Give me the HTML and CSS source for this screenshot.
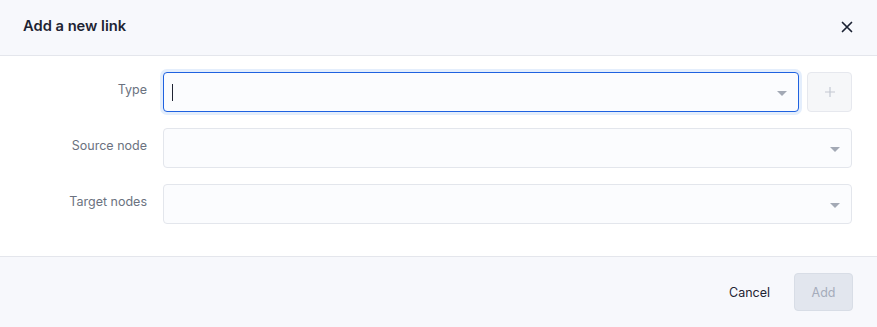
FILE: index.html
```html
<!DOCTYPE html>
<html>
<head>
<meta charset="utf-8">
<link rel="stylesheet" href="styles.css">
</head>
<body>
<div class="modal">
  <header class="head">
    <h1 class="title">Add a new link</h1>
    <button class="close" aria-label="Close">
      <svg width="12" height="12" viewBox="0 0 12 12"><path d="M1.5 1.5L10.5 10.5M10.5 1.5L1.5 10.5" stroke="#1b2233" stroke-width="1.7" stroke-linecap="round"/></svg>
    </button>
  </header>
  <div class="body">
    <label class="label">Type</label>
    <div class="typerow">
      <div class="select focus">
        <span class="cursor"></span>
        <span class="arrow"></span>
      </div>
      <button class="plus" disabled>
        <svg width="12" height="12" viewBox="0 0 12 12"><path d="M6 1V11M1 6H11" stroke="#c3c8d2" stroke-width="1.2"/></svg>
      </button>
    </div>
    <label class="label">Source node</label>
    <div class="select"><span class="arrow"></span></div>
    <label class="label">Target nodes</label>
    <div class="select"><span class="arrow"></span></div>
  </div>
  <footer class="foot">
    <button class="cancel">Cancel</button>
    <button class="add" disabled>Add</button>
  </footer>
</div>
</body>
</html>
```
FILE: styles.css
```css
* { box-sizing: border-box; }
html, body { margin: 0; padding: 0; background: #fff; }
body { font-family: Inter, "Noto Sans", sans-serif; color: #1f2433; }
.modal { width: 877px; height: 327px; display: flex; flex-direction: column; }
.head {
  height: 56px; background: #f7f8fc; border-bottom: 1px solid #e4e6ec;
  display: flex; align-items: center; justify-content: space-between;
  padding: 0 23px 4px 23px;
}
.title { margin: 0; font-size: 14.7px; font-weight: 600; color: #1e2433; letter-spacing: 0; }
.close { background: none; border: 0; padding: 0; width: 12px; height: 12px; display: flex; margin-top: 3px; margin-right: 1px; }
.body {
  display: grid; grid-template-columns: 124px 1fr; column-gap: 16px; row-gap: 16px;
  padding: 16px 25px 32px 23px; align-items: start;
}
.label { font-size: 12.5px; line-height: 16px; padding-top: 10px; color: #6b7280; text-align: right; }
.typerow { display: flex; gap: 8px; }
.select {
  flex: 1; height: 40px; border: 1px solid #e3e6ec; border-radius: 4px; background: #fbfcfe;
  position: relative; display: flex; align-items: center;
}
.select.focus { border-color: #1f62e0; box-shadow: 0 0 0 3px #e4eefc; }
.cursor { width: 1px; height: 17px; background: #1f2433; margin-left: 8px; }
.arrow {
  position: absolute; right: 11px; top: 18px; width: 0; height: 0;
  border-left: 5px solid transparent; border-right: 5px solid transparent; border-top: 5px solid #a3a9b5;
}
.plus {
  width: 45px; height: 40px; border: 1px solid #e6e8ee; border-radius: 4px; background: #f6f7f9;
  display: flex; align-items: center; justify-content: center; padding: 0;
}
.foot {
  flex: 1; background: #f7f8fc; border-top: 1px solid #e4e6ec;
  display: flex; justify-content: flex-end; align-items: flex-start; gap: 24px;
  padding: 16px 24px 0 0;
}
.cancel { background: none; border: 0; padding: 0; height: 38px; font: 12.5px Inter, sans-serif; color: #1f2433; }
.add {
  width: 59px; height: 38px; border: 1px solid #d8dde6; border-radius: 4px; background: #e2e6ee;
  font: 12.5px Inter, sans-serif; color: #a5acbb; padding: 0;
}
```
